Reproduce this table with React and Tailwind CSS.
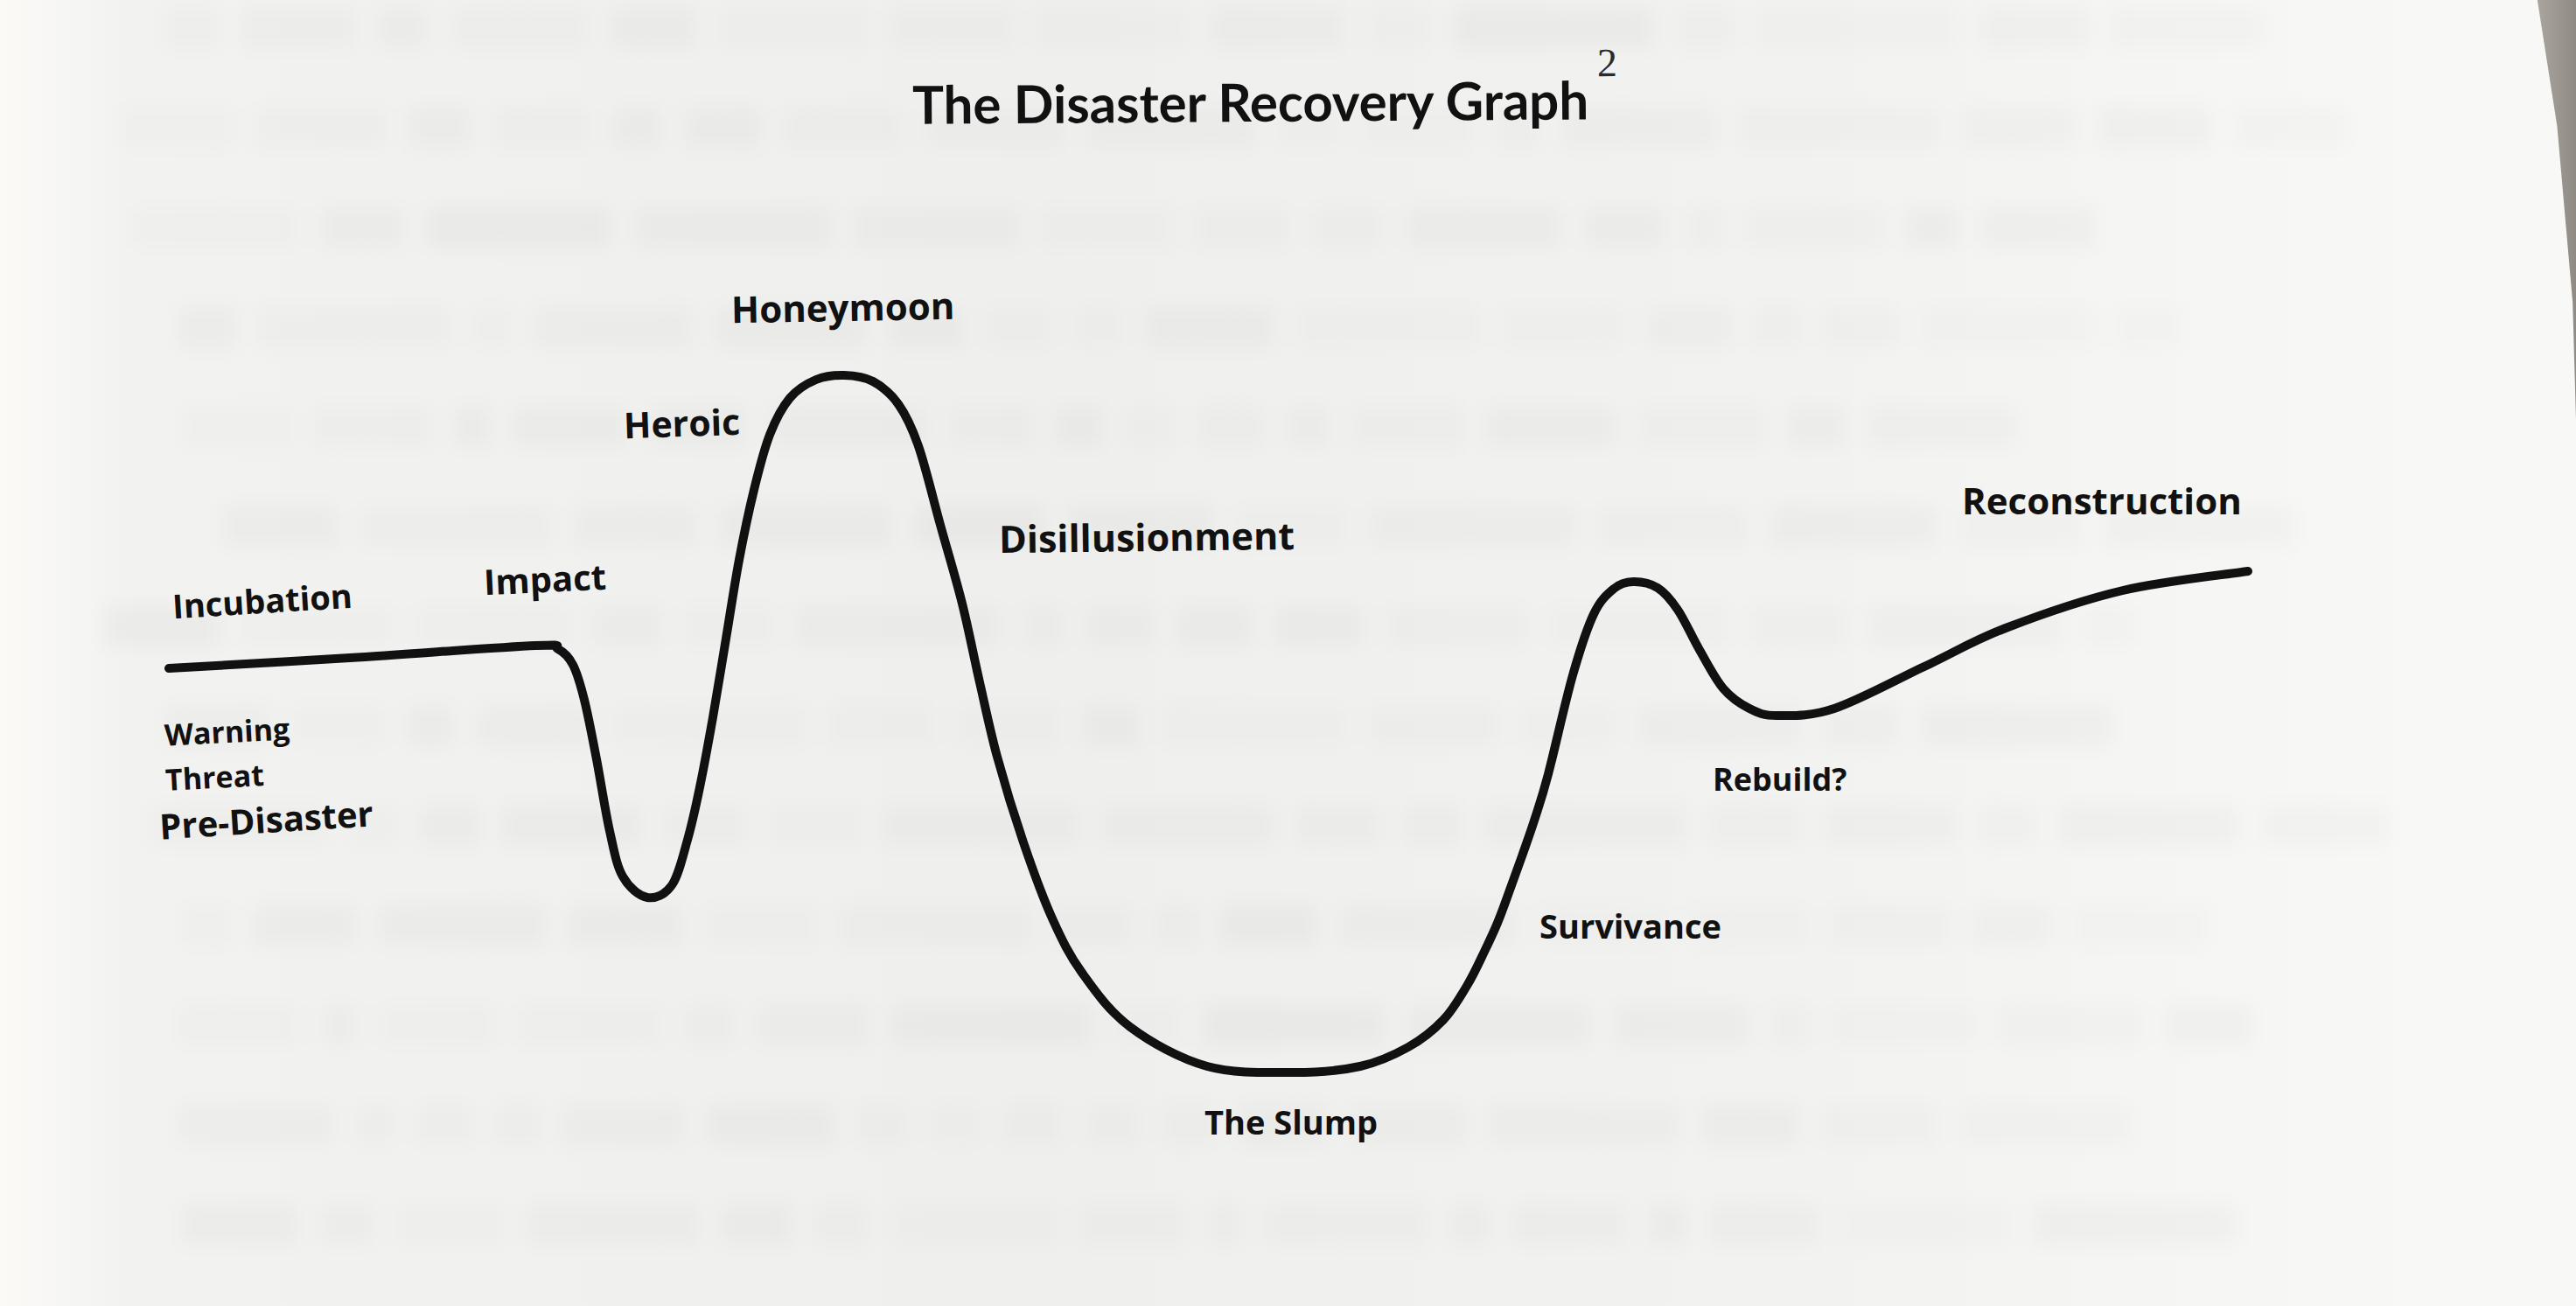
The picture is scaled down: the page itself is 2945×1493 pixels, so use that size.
import React from 'react';

// points along the recovery curve, in page pixels
const CURVE = [
  [193, 764], [400, 752], [612, 738], [638, 742], [655, 760], [668, 800], [682, 868],
  [697, 950], [712, 1002], [740, 1026], [768, 1012], [786, 960], [800, 900], [815, 820],
  [830, 730], [845, 640], [862, 560], [880, 497], [903, 455], [933, 434], [965, 429],
  [998, 436], [1027, 462], [1050, 510], [1075, 600], [1100, 690], [1120, 780], [1140, 865],
  [1170, 963], [1203, 1050], [1237, 1112], [1292, 1174], [1380, 1219], [1480, 1226],
  [1555, 1219], [1610, 1197], [1650, 1166], [1677, 1127], [1695, 1092], [1712, 1055],
  [1728, 1012], [1742, 973], [1755, 935], [1770, 885], [1798, 772], [1822, 702],
  [1845, 673], [1867, 665], [1895, 672], [1918, 697], [1943, 743], [1970, 787],
  [2000, 810], [2032, 818], [2097, 810], [2200, 762], [2293, 718], [2427, 675], [2570, 653],
];

const toPath = (pts) => {
  let d = `M ${pts[0][0]} ${pts[0][1]}`;
  for (let i = 0; i < pts.length - 1; i++) {
    const p0 = pts[i - 1] || pts[i];
    const p1 = pts[i];
    const p2 = pts[i + 1];
    const p3 = pts[i + 2] || p2;
    const c1 = [p1[0] + (p2[0] - p0[0]) / 6, p1[1] + (p2[1] - p0[1]) / 6];
    const c2 = [p2[0] - (p3[0] - p1[0]) / 6, p2[1] - (p3[1] - p1[1]) / 6];
    d += ` C ${c1[0].toFixed(1)} ${c1[1].toFixed(1)}, ${c2[0].toFixed(1)} ${c2[1].toFixed(1)}, ${p2[0]} ${p2[1]}`;
  }
  return d;
};

// faint print showing through from the back of the page
const seeded = (seed) => {
  let s = seed;
  return () => {
    s = (s * 9301 + 49297) % 233280;
    return s / 233280;
  };
};

const ghostRows = (() => {
  const rnd = seeded(7);
  const rows = [];
  for (let r = 0; r < 13; r++) {
    const start = 110 + Math.round(rnd() * 160);
    const end = 2300 + Math.round(rnd() * 320);
    const words = [];
    let x = start;
    while (x < end) {
      const w = 40 + Math.round(rnd() * 200);
      words.push({ w, a: 0.01 + rnd() * 0.016 });
      x += w + 26;
    }
    rows.push({ start, words });
  }
  return rows;
})();

const Label = ({ className = '', children }) => (
  <div
    className={`whitespace-nowrap font-bold text-[#111] font-['Open_Sans',sans-serif] ${className}`}
  >
    {children}
  </div>
);

export default function App() {
  return (
    <div className="relative w-[2945px] h-[1493px] overflow-hidden bg-[linear-gradient(90deg,#fbfaf7_0%,#f2f2f0_5%,#efefed_40%,#f2f2f0_70%,#f8f8f7_95%)]">
      {/* bleed-through lines */}
      <div aria-hidden className="absolute inset-0 flex flex-col gap-[66px] pt-[8px] blur-[10px]">
        {ghostRows.map((row, i) => (
          <div key={i} className="flex h-[48px] gap-[26px]" style={{ paddingLeft: row.start }}>
            {row.words.map((word, j) => (
              <span
                key={j}
                className="h-full rounded-md bg-black"
                style={{ width: word.w, opacity: word.a }}
              />
            ))}
          </div>
        ))}
      </div>

      {/* edge of the next page */}
      <div className="absolute right-0 top-0 h-[480px] w-[48px] bg-[linear-gradient(90deg,#aca79f,#8f8a83)] [clip-path:polygon(8%_0,100%_0,100%_100%,92%_72%,55%_30%)]" />

      <svg className="absolute inset-0" width="2945" height="1493" viewBox="0 0 2945 1493">
        <path d={toPath(CURVE)} fill="none" stroke="#111" strokeWidth="10" strokeLinecap="round" strokeLinejoin="round" />
      </svg>

      {/* title */}
      <div className="absolute left-[1043px] top-[86px] flex -rotate-[0.4deg] items-start">
        <span className="whitespace-nowrap font-['Lato',sans-serif] text-[60px] font-bold leading-none text-[#111]">
          The Disaster Recovery Graph
        </span>
        <span className="-mt-[34px] ml-[10px] font-['Liberation_Serif',serif] text-[46px] leading-none text-[#2a2a2a]">2</span>
      </div>

      {/* stage labels */}
      <Label className="absolute left-[197px] top-[667px] text-[38px] leading-none -rotate-[3.5deg]">Incubation</Label>
      <Label className="absolute left-[553px] top-[642px] text-[40px] leading-none -rotate-[2.7deg]">Impact</Label>
      <Label className="absolute left-[713px] top-[463px] text-[41px] leading-none -rotate-[1.9deg]">Heroic</Label>
      <Label className="absolute left-[836px] top-[330px] text-[42px] leading-none -rotate-[1deg]">Honeymoon</Label>
      <Label className="absolute left-[1142px] top-[592px] text-[43px] leading-none -rotate-[0.7deg]">Disillusionment</Label>

      <div className="absolute left-[182px] top-[824px] flex flex-col items-start">
        <Label className="ml-[6px] text-[34px] leading-[0.75] -rotate-[3deg]">Warning</Label>
        <Label className="ml-[7px] mt-[26px] text-[34px] leading-[0.75] -rotate-[3deg]">Threat</Label>
        <Label className="mt-[21px] text-[40px] leading-[0.75] -rotate-[3.6deg]">Pre-Disaster</Label>
      </div>

      <Label className="absolute left-[1377px] top-[1263px] text-[38px] leading-none">The Slump</Label>
      <Label className="absolute left-[1760px] top-[1039px] text-[38px] leading-none">Survivance</Label>
      <Label className="absolute left-[1958px] top-[873px] text-[36px] leading-none">Rebuild?</Label>
      <Label className="absolute left-[2243px] top-[551px] text-[42px] leading-none">Reconstruction</Label>
    </div>
  );
}
